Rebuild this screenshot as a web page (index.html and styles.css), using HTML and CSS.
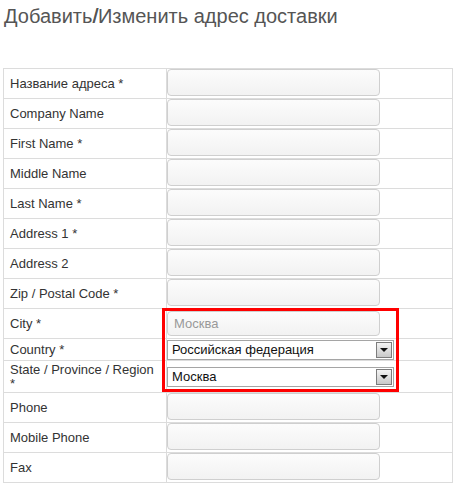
FILE: index.html
```html
<!DOCTYPE html>
<html lang="ru">
<head>
<meta charset="utf-8">
<title>Добавить/Изменить адрес доставки</title>
<link rel="stylesheet" href="styles.css">
</head>
<body>
<div class="page">
  <h1 class="title">Добавить<span class="slash">/</span>Изменить адрес доставки</h1>
  <div class="form">
    <div class="label">Название адреса *</div>
    <div class="value"><span class="input"></span></div>

    <div class="label">Company Name</div>
    <div class="value"><span class="input"></span></div>

    <div class="label">First Name *</div>
    <div class="value"><span class="input"></span></div>

    <div class="label">Middle Name</div>
    <div class="value"><span class="input"></span></div>

    <div class="label">Last Name *</div>
    <div class="value"><span class="input"></span></div>

    <div class="label">Address 1 *</div>
    <div class="value"><span class="input"></span></div>

    <div class="label">Address 2</div>
    <div class="value"><span class="input"></span></div>

    <div class="label">Zip / Postal Code *</div>
    <div class="value"><span class="input"></span></div>

    <div class="label">City *</div>
    <div class="value value-city"><span class="input input-city">Москва</span></div>

    <div class="label label-country">Country *</div>
    <div class="value value-select value-country">
      <div class="select"><span class="select-text">Российская федерация</span><span class="select-arrow"><span class="tri"></span></span></div>
    </div>

    <div class="label label-state">State / Province / Region *</div>
    <div class="value value-select value-state">
      <div class="select"><span class="select-text">Москва</span><span class="select-arrow"><span class="tri"></span></span></div>
    </div>

    <div class="label">Phone</div>
    <div class="value"><span class="input"></span></div>

    <div class="label">Mobile Phone</div>
    <div class="value"><span class="input"></span></div>

    <div class="label">Fax</div>
    <div class="value"><span class="input"></span></div>
  </div>
  <div class="highlight"></div>
</div>
</body>
</html>
```

FILE: styles.css
```css
html, body {
  margin: 0;
  padding: 0;
  background: #fff;
}

body {
  font-family: "Liberation Sans", Arial, sans-serif;
  color: #333;
}

.page {
  position: relative;
  padding: 4px 0 0 3px;
  width: 450px;
}

.title {
  margin: 0 0 0 1px;
  font-size: 20px;
  font-weight: normal;
  line-height: 24px;
  color: #555;
}

.slash {
  text-shadow: 0.6px 0 0 #555;
}

.form {
  margin-top: 40px;
  display: grid;
  grid-template-columns: 163px 286px;
  border-top: 1px solid #dcdcdc;
  border-left: 1px solid #dcdcdc;
}

.label,
.value {
  box-sizing: border-box;
  height: 30px;
  border-right: 1px solid #dcdcdc;
  border-bottom: 1px solid #dcdcdc;
}

.label {
  display: flex;
  align-items: center;
  padding: 0 6px;
  font-size: 13px;
  line-height: 14px;
  color: #333;
}

.value {
  display: flex;
  align-items: flex-start;
}

.label-country,
.value-country {
  height: 22px;
}

.label-state,
.value-state {
  height: 32px;
}

.value-select {
  align-items: center;
}

.value-city {
  padding-top: 2px;
}

.input {
  display: block;
  box-sizing: border-box;
  width: 213px;
  height: 27px;
  border: 1px solid #cfcfcf;
  border-radius: 4px;
  background: linear-gradient(#fcfcfc, #f2f2f2);
}

.input-city {
  height: 25px;
  padding: 0 6px;
  font-size: 13px;
  line-height: 23px;
  color: #999;
}

.select {
  box-sizing: border-box;
  display: flex;
  width: 227px;
  height: 20px;
  border: 1px solid #a5a5a5;
  background: #fff;
}

.select-text {
  flex: 1;
  padding-left: 4px;
  font-size: 13px;
  line-height: 18px;
  color: #111;
}

.select-arrow {
  box-sizing: border-box;
  width: 16px;
  height: 16px;
  margin: 1px;
  border: 1px solid #7d7d7d;
  background: linear-gradient(#f4f4f4, #c9c9c9);
  display: flex;
  align-items: center;
  justify-content: center;
}

.tri {
  width: 0;
  height: 0;
  border-left: 4px solid transparent;
  border-right: 4px solid transparent;
  border-top: 4px solid #111;
  margin-top: 1px;
}

.highlight {
  position: absolute;
  left: 162px;
  top: 308px;
  width: 237px;
  height: 84px;
  box-sizing: border-box;
  border: 3px solid #f00;
}
```
